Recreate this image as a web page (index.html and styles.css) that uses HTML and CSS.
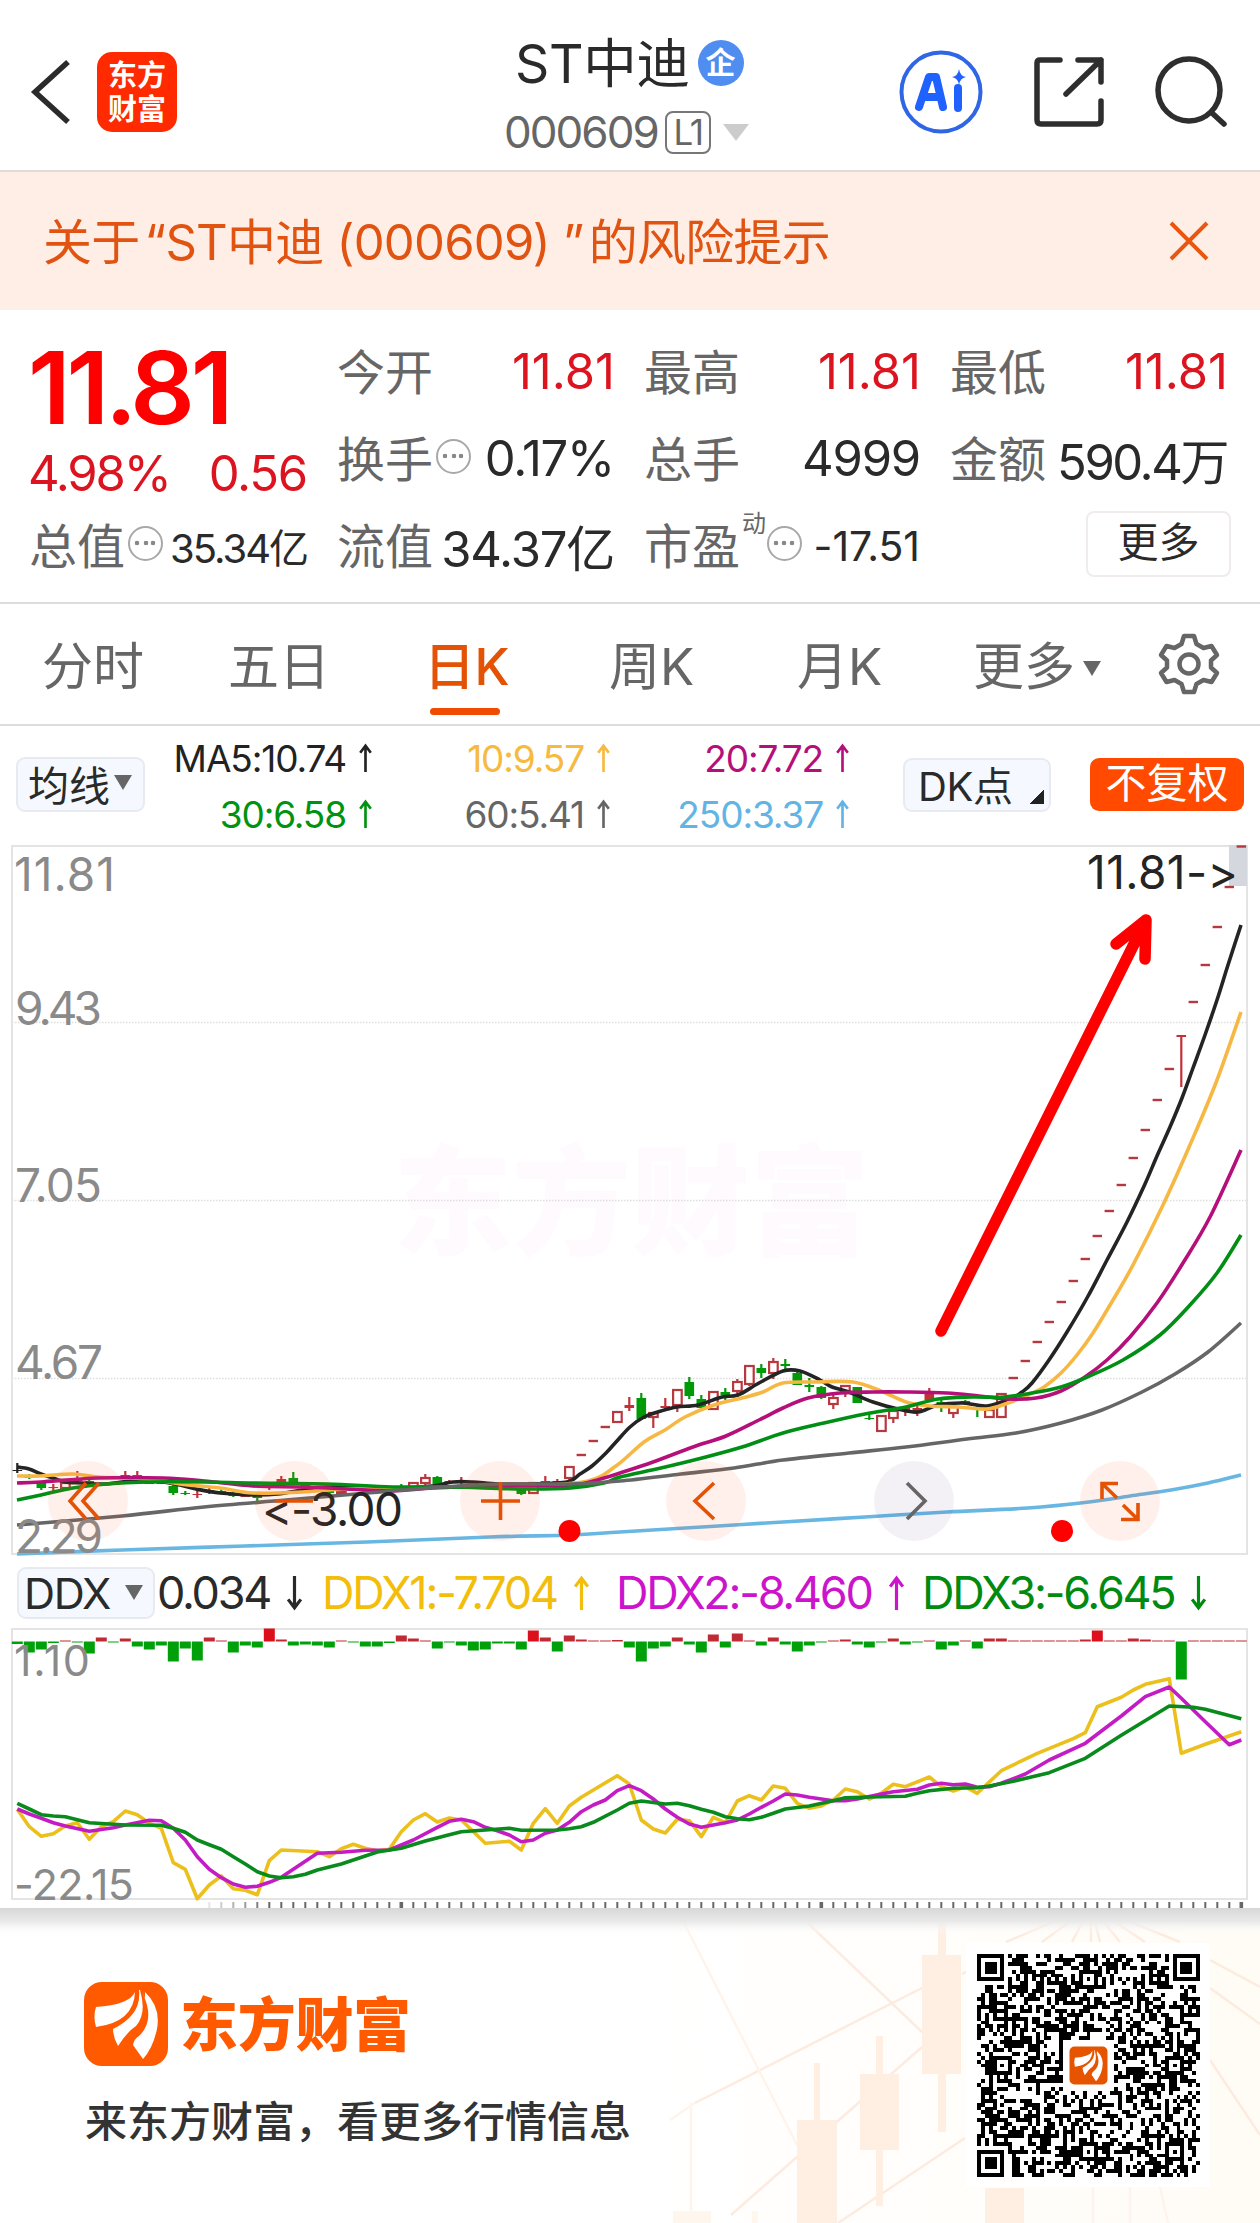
FILE: index.html
```html
<!DOCTYPE html>
<html lang="zh-CN">
<head>
<meta charset="utf-8">
<title>ST中迪 000609</title>
<link rel="stylesheet" href="styles.css">
</head>
<body>
<header class="topbar">
  <div class="topbar-left">
    <svg class="back" width="42" height="70" viewBox="0 0 42 70"><path d="M38 5 5 35 38 65"/></svg>
    <div class="app-logo"><span>东方</span><span>财富</span></div>
  </div>
  <div class="stock">
    <div class="stock-name"><span>ST中迪</span><span class="corp">企</span></div>
    <div class="stock-code"><span>000609</span><span class="level">L1</span><i class="tri tri-light"></i></div>
  </div>
  <div class="topbar-right">
    <svg width="84" height="84" viewBox="0 0 84 84"><circle cx="42" cy="42" r="39.5" fill="none" stroke="#2f66e6" stroke-width="4"/><path d="M20 57 30 27h7l7 30M24 47h16M59 38v20" fill="none" stroke="#1f62ff" stroke-width="8" stroke-linecap="round" stroke-linejoin="round"/><path d="M60 19q1 7 7 8-6 1-7 8-1-7-7-8 6-1 7-8z" fill="#1f62ff"/></svg>
    <svg class="line-icon" width="72" height="72" viewBox="0 0 72 72"><path d="M27 4H7Q4 4 4 7v57q0 4 4 4h56q4 0 4-4V45M45 4h23v22M68 4 33 38"/></svg>
    <svg class="line-icon" width="72" height="72" viewBox="0 0 72 72"><circle cx="34" cy="34" r="31"/><path d="m57 57 12 11"/></svg>
  </div>
</header>

<div class="notice">
  <p>关于<span class="q1">“</span>ST中迪<span class="paren">(</span>000609<span class="paren-end">)</span><span class="q2">”</span>的风险提示</p>
  <svg width="40" height="40" viewBox="0 0 40 40"><path d="M2 2 38 38M38 2 2 38"/></svg>
</div>

<section class="quote">
  <div class="price-block">
    <div class="price">11.81</div>
    <div class="change"><span>4.98%</span><span>0.56</span></div>
  </div>
  <div class="stat"><label>今开</label><b class="up">11.81</b></div>
  <div class="stat"><label>最高</label><b class="up">11.81</b></div>
  <div class="stat"><label>最低</label><b class="up">11.81</b></div>
  <div class="stat"><label>换手</label><i class="dots"></i><b>0.17%</b></div>
  <div class="stat"><label>总手</label><b>4999</b></div>
  <div class="stat"><label>金额</label><b class="tight">590.4万</b></div>
  <div class="stat"><label>总值</label><i class="dots"></i><b class="small">35.34亿</b></div>
  <div class="stat"><label>流值</label><b>34.37亿</b></div>
  <div class="stat"><label>市盈</label><sup>动</sup><i class="dots"></i><b class="small wide">-17.51</b></div>
  <div class="stat"><button class="more">更多</button></div>
</section>

<nav class="tabs">
  <a>分时</a><a>五日</a><a class="active">日K</a><a>周K</a><a>月K</a><a>更多<i class="tri tri-tab"></i></a>
  <svg width="62" height="62" viewBox="0 0 62 62"><path d="M26 3h10l2.500 8 7 4 8-2 5.500 9-6 5.500v7l6 5.500-5.500 9-8-2-7 4-2.500 8H26l-2.500-8-7-4-8 2L3 40l6-5.500v-7L3 22l5.500-9 8 2 7-4z"/><circle cx="31" cy="31" r="9.5"/></svg>
</nav>

<section class="ma-bar">
  <div class="chip chip-ma">均线<i class="tri tri-chip"></i></div>
  <div class="ma-grid">
    <span class="c-ma5">MA5:10.74<svg class="arr"><use href="#up"/></svg></span>
    <span class="c-ma10">10:9.57<svg class="arr"><use href="#up"/></svg></span>
    <span class="c-ma20">20:7.72<svg class="arr"><use href="#up"/></svg></span>
    <span class="c-ma30">30:6.58<svg class="arr"><use href="#up"/></svg></span>
    <span class="c-ma60">60:5.41<svg class="arr"><use href="#up"/></svg></span>
    <span class="c-ma250">250:3.37<svg class="arr"><use href="#up"/></svg></span>
  </div>
  <div class="chip chip-dk">DK点<i class="corner"></i></div>
  <div class="adjust">不复权</div>
</section>

<svg class="chart" id="kline" width="1260" height="711" viewBox="0 845 1260 711">
  <text class="watermark" x="393" y="1246" textLength="476">东方财富</text>
  <g class="grid"><path d="M12 1022.500H1247M12 1200.500H1247M12 1378.500H1247"/></g>
  <rect x="12" y="846" width="1235" height="708" class="frame"/>
  <rect x="1229" y="845" width="18" height="41" fill="#d5d7de"/>
  <g class="axis">
    <text x="14" y="891" textLength="101">11.81</text>
    <text x="15" y="1025" textLength="87">9.43</text>
    <text x="15" y="1202" textLength="87">7.05</text>
    <text x="15" y="1379" textLength="88">4.67</text>
  </g>
  <g id="candles"></g>
  <g id="averages"></g>
  <text class="axis" x="15" y="1553" textLength="88">2.29</text>
  <g class="mark">
    <text x="1087" y="889" textLength="151">11.81-&gt;</text>
    <text x="262" y="1526" textLength="141">&lt;-3.00</text>
  </g>
  <g class="pads">
    <circle cx="88" cy="1501" r="40"/><circle cx="295" cy="1501" r="40"/><circle cx="500" cy="1501" r="40"/><circle cx="706" cy="1501" r="40"/><circle class="off" cx="914" cy="1501" r="40"/><circle cx="1120" cy="1501" r="40"/>
  </g>
  <g class="pad-icons">
    <path d="M86 1483 70 1501 86 1519M99 1483 83 1501 99 1519M481 1501H520M500.500 1482V1520M714 1483 695 1501 714 1519"/>
    <path d="M275 1501H313" stroke-width="5"/>
    <path d="M1118 1483.500H1102V1499M1102 1483.500 1117 1498M1121 1519.500H1138V1503M1138 1519.500 1123 1505"/>
    <path class="off" d="M907 1483 925 1501 907 1519"/>
  </g>
  <g fill="#f00"><circle cx="569.500" cy="1531" r="11"/><circle cx="1062" cy="1531" r="11"/></g>
  <path class="pointer" d="M941 1331 1146 920M1116 944 1146 920 1145 959"/>
</svg>

<section class="ddx-bar">
  <div class="chip chip-ddx">DDX<i class="tri tri-chip"></i></div>
  <span class="d0">0.034<svg class="arr"><use href="#down"/></svg></span>
  <span class="d1">DDX1:-7.704<svg class="arr"><use href="#up"/></svg></span>
  <span class="d2">DDX2:-8.460<svg class="arr"><use href="#up"/></svg></span>
  <span class="d3">DDX3:-6.645<svg class="arr"><use href="#down"/></svg></span>
</section>

<svg class="chart" id="ddx" width="1260" height="281" viewBox="0 1627 1260 281">
  <rect x="12" y="1629" width="1235" height="270" class="frame"/>
  <g id="bars"></g>
  <g class="axis">
    <text x="14" y="1676" textLength="76">1.10</text>
    <text x="14" y="1900" textLength="120">-22.15</text>
  </g>
  <g id="ddx-lines"></g>
  <g id="ticks"></g>
</svg>

<footer class="promo">
  <svg class="promo-bg" width="1260" height="315" viewBox="0 1908 1260 315">
    <defs>
      <linearGradient id="cream" x1="0" x2="1"><stop offset="0" stop-color="#fff"/><stop offset="1" stop-color="#fffcf6"/></linearGradient>
      <linearGradient id="shade" x1="0" x2="0" y1="0" y2="1"><stop offset="0" stop-color="#d6d8d6"/><stop offset=".5" stop-color="#e9e9e9"/><stop offset="1" stop-color="#fff" stop-opacity="0"/></linearGradient>
    </defs>
    <rect x="660" y="1908" width="600" height="315" fill="url(#cream)"/>
    <g fill="none" stroke="#fdebdf" stroke-width="2.500">
      <path d="M792 1908 922 2032M695 2103 922 1988M731 2215 922 2047M838 2223 965 2138M962 1974 970 1970M1210 1960 1260 1987M1210 1988 1260 2024M1210 2060 1260 2135"/>
      <path d="M681 1917 797 2145M670 2120 695 2103M691 2103V2223M1093 2187V2223M1130 2187V2223M1160 2187 1168 2223" stroke="#fef4ec"/>
      <path d="M1091 1906 1006 1942M1091 1906 1042 1942M1091 1906 1072 1942M1091 1906V1942M1091 1906 1100 1942M1091 1906 1120 1942M1091 1906 1145 1942M1091 1906 1180 1942"/>
    </g>
    <g fill="#ffeee2"><path d="M922 1955h39v119h-39zM938 1923h8v32h-8zM938 2074h8v58h-8zM860 2074h39v76h-39zM876 2036h7v38h-7zM876 2150h7v56h-7zM797 2120h40v103h-40zM814 2063h6v57h-6zM985 2188h39v35h-39z"/></g>
    <path d="M673 2211h38v12h-38zM752 2211h6v12h-6z" fill="#fff6ee"/>
    <rect y="1908" width="1260" height="27" fill="url(#shade)"/>
  </svg>
  <div class="promo-text">
    <div class="brand">
      <svg width="84" height="84" viewBox="0 0 84 84"><rect width="84" height="84" rx="18" fill="#ff5a00"/><use href="#petals"/></svg>
      <strong>东方财富</strong>
    </div>
    <p>来东方财富，看更多行情信息</p>
  </div>
  <svg class="qr" id="qr" width="244" height="244" viewBox="-11 -11 244 244"></svg>
</footer>

<svg class="defs" width="0" height="0">
  <symbol id="up" viewBox="0 0 16 34"><path d="M8 33V3M2 11 8 3 14 11"/></symbol>
  <symbol id="down" viewBox="0 0 16 34"><path d="M8 1V31M2 23 8 31 14 23"/></symbol>
  <g id="petals" fill="#fff"><path d="M51 10Q45 23 12 25 9 34 12 45 50 40 51 10z"/><path d="M55 8Q58 33 29 47 29 55 34 64 43 50 52 44 63 32 56 8z"/><path d="M61 10Q77 25 73 47 69 66 59 77L49 63Q50 57 55 54 72 38 58 10L61 16z"/></g>
</svg>
<script src="chart.js"></script>
</body>
</html>
```
FILE: styles.css
```css
* { box-sizing: border-box; }
body {
  margin: 0;
  width: 1260px;
  background: #fff;
  color: #2a2a2a;
  font-family: "Inter", "Noto Sans CJK SC", sans-serif;
  font-feature-settings: "calt" 0;
  letter-spacing: -0.02em;
}
svg { display: block; flex: none; }
.defs { position: absolute; }
.tri { display: inline-block; border: solid transparent; border-width: 0; flex: none; }

.topbar { display: grid; grid-template-columns: 1fr 340px 1fr; height: 172px; border-bottom: 2px solid #dedcdb; }
.topbar-left { display: flex; align-items: flex-start; padding: 52px 0 0 30px; gap: 25px; }
.back { margin-top: 5px; fill: none; stroke: #2b2b2b; stroke-width: 5.5; }
.app-logo { width: 80px; height: 80px; border-radius: 15px; background: #ff2a00; color: #fff; font: 700 29px/34px "Noto Sans CJK SC", sans-serif; letter-spacing: 0; display: flex; flex-direction: column; align-items: center; padding-top: 4px; }
.stock { padding-top: 28px; }
.stock-name { display: flex; align-items: center; height: 62px; padding-left: 55px; font-size: 53.5px; gap: 8px; }
.corp { width: 46px; height: 46px; margin-top: 8px; border-radius: 50%; background: #4f8df0; color: #fff; font-size: 30px; font-weight: 700; line-height: 44px; text-align: center; letter-spacing: 0; }
.stock-code { display: flex; align-items: center; height: 76px; margin-top: 4px; padding-left: 44px; font-size: 44px; color: #666; letter-spacing: -0.045em; }
.level { margin-left: 7px; width: 46px; height: 43px; border: 2px solid #777; border-radius: 8px; font-size: 35px; line-height: 39px; text-align: center; }
.tri-light { margin-left: 12px; border-width: 17px 13px 0; border-top-color: #ccc; }
.topbar-right { display: flex; align-items: center; padding: 14px 0 0 99px; height: 170px; }
.topbar-right svg:nth-child(2) { margin-left: 50px; }
.topbar-right svg:nth-child(3) { margin-left: 50px; }
.line-icon { fill: none; stroke: #2e2e2e; stroke-width: 5.5; stroke-linecap: round; stroke-linejoin: round; }

.notice { display: flex; align-items: center; justify-content: space-between; height: 138px; padding: 0 51px 0 43px; background: #ffeee6; color: #e05310; }
.notice p { margin: 4px 0 0; font-size: 49px; line-height: 60px; letter-spacing: -0.015em; white-space: nowrap; }
.notice .q1 { margin-left: 5px; }
.notice .paren { margin-left: 13px; }
.notice .paren-end { margin-left: -1px; }
.notice .q2 { margin: 0 5px 0 13px; }
.notice svg { fill: none; stroke: #e8560f; stroke-width: 4; }

.quote { display: grid; grid-template-columns: 277px 276px 275px 276px; grid-template-rows: repeat(3, 87px); column-gap: 31px; height: 294px; padding: 18px 30px 0; border-bottom: 2px solid #dcdcdc; }
.price-block { grid-row: span 2; }
.price { font-size: 101px; line-height: 118px; font-weight: 600; color: #f00; letter-spacing: -0.042em; margin-left: -2px; }
.change { display: flex; justify-content: space-between; margin-left: -2px; font-size: 49px; line-height: 56px; color: #dc1420; letter-spacing: -0.045em; }
.change span:last-child { letter-spacing: -0.025em; }
.stat { display: flex; align-items: center; white-space: nowrap; min-width: 0; }
.stat label { margin: -6px 0 0 -1px; font-size: 48px; color: #666; letter-spacing: 0; }
.stat b { margin-left: auto; font-size: 49px; font-weight: 400; letter-spacing: -0.025em; }
.stat .tight { letter-spacing: -0.05em; }
.stat .small { font-size: 40px; letter-spacing: -0.05em; }
.stat .wide { font-size: 41px; letter-spacing: 0; }
.stat .up { color: #dc1420; letter-spacing: 0; margin-right: -1px; }
.stat sup { align-self: flex-start; margin: 10px -2px 0 2px; font-size: 24px; line-height: 24px; color: #666; }
.dots { width: 35px; height: 35px; margin: -5px 0 0 3px; border: 2.5px solid #a8a8a8; border-radius: 50%; background: radial-gradient(circle, #888 2px, transparent 2.6px) center / 8px 8px no-repeat, radial-gradient(circle, #888 2px, transparent 2.6px) 3px center / 8px 8px no-repeat, radial-gradient(circle, #888 2px, transparent 2.6px) 19px center / 8px 8px no-repeat; }
.more { margin: -3px -4px 0 auto; width: 145px; height: 66px; border: 2px solid #f0ecec; border-radius: 8px; background: #fff; font: inherit; font-size: 41px; line-height: 56px; color: #2a2a2a; padding: 0 0 4px; letter-spacing: 0; }

.tabs { display: flex; position: relative; height: 122px; border-bottom: 2px solid #dcdcdc; color: #666; font-size: 51px; line-height: 125px; letter-spacing: 0; padding-left: 42px; }
.tabs a { width: 186px; white-space: nowrap; }
.tabs a:nth-child(2) { width: 196px; }
.tabs a:nth-child(3) { width: 185px; }
.tabs a:nth-child(4) { width: 188px; }
.tabs a:nth-child(5) { width: 176px; }
.tabs a:nth-child(6) { width: 185px; }
.tabs .active { position: relative; color: #e35205; font-weight: 500; letter-spacing: -0.01em; }
.tabs .active::after { content: ""; position: absolute; left: 6px; top: 104px; width: 70px; height: 7px; border-radius: 4px; background: #f04b00; }
.tri-tab { border-width: 15px 9px 0; border-top-color: #666; margin: 0 0 9px 8px; }
.tabs svg { margin: 29px 0 0; fill: none; stroke: #666; stroke-width: 4.5; stroke-linejoin: round; }

.ma-bar { display: flex; align-items: flex-start; height: 119px; padding-left: 16px; }
.chip { display: flex; align-items: center; border: 2px solid #e8eaf2; border-radius: 9px; background: #f5f9ff; font-size: 41px; letter-spacing: 0; white-space: nowrap; }
.tri-chip { border-width: 15px 9px 0; border-top-color: #666; }
.chip-ma { width: 129px; height: 55px; margin-top: 31px; padding: 0 0 4px 10px; gap: 4px; }
.ma-grid { display: grid; grid-template-columns: 228px 238px 239px; grid-auto-rows: 56px; padding-top: 4px; font-size: 37px; letter-spacing: -0.03em; }
.ma-grid span { display: flex; justify-content: flex-end; align-items: center; white-space: nowrap; }
.arr { width: 15px; height: 30px; margin-left: 12px; fill: none; stroke: currentColor; stroke-width: 3; }
.c-ma5 { color: #222; } .c-ma10 { color: #f7b93e; } .c-ma20 { color: #b5107a; }
.c-ma30 { color: #00930f; } .c-ma60 { color: #666; } .c-ma250 { color: #62b4e4; }
.chip-dk { position: relative; width: 148px; height: 54px; margin: 32px 0 0 53px; padding: 0 0 3px 13px; font-size: 40px; letter-spacing: -0.01em; }
.corner { position: absolute; right: 5px; bottom: 6px; width: 14px; height: 14px; background: linear-gradient(135deg, transparent 50%, #222 50%); }
.adjust { width: 154px; height: 53px; margin: 32px 0 0 39px; border-radius: 9px; background: #ff4a00; color: #fff; font-size: 41px; line-height: 51px; text-align: center; letter-spacing: 0; }

.chart { overflow: visible; }
.chart text { font-size: 46px; letter-spacing: 0; }
.chart .axis, .chart .axis text { fill: #8a8a8a; }
.chart .mark text { fill: #242424; }
#ddx .axis text { font-size: 43px; }
.chart .watermark { font: 900 119px "Noto Sans CJK SC", sans-serif; fill: #fefafe; }
.frame { fill: none; stroke: #e4e4e4; stroke-width: 2; }
.grid path { stroke: #dedede; stroke-width: 1.3; stroke-dasharray: 1.5 1.5; }
.pads circle { fill: #ff5a2d; fill-opacity: .09; }
.pads .off { fill: #6a3f84; fill-opacity: .07; }
.pad-icons path { fill: none; stroke: #e35205; stroke-width: 3.6; }
.pad-icons .off { stroke: #666; }
.pointer { fill: none; stroke: #f00; stroke-width: 11.5; stroke-linecap: round; stroke-linejoin: round; }
.series { fill: none; stroke-width: 3.6; stroke-linejoin: round; }

.ddx-bar { display: flex; align-items: center; height: 71px; padding: 2px 0 0 17px; font-size: 45px; letter-spacing: -0.05em; white-space: nowrap; }
.ddx-bar span { display: flex; align-items: center; }
.ddx-bar .arr { width: 17px; height: 36px; margin-left: 16px; }
.chip-ddx { width: 138px; height: 52px; padding-left: 5px; font-size: 43px; gap: 15px; letter-spacing: -0.03em; }
.d0 { width: 167px; padding-left: 2px; }
.d1 { width: 294px; color: #f3bd0c; }
.d2 { width: 306px; color: #cc14cc; }
.d3 { color: #008a10; }

.promo { position: relative; display: flex; justify-content: space-between; height: 315px; padding: 35px 50px 0 84px; }
.promo-bg { position: absolute; left: 0; top: 0; }
.promo-text, .qr { position: relative; }
.promo-text { padding-top: 39px; }
.brand { display: flex; align-items: center; gap: 12px; height: 84px; color: #ff5a00; }
.brand strong { margin-top: -6px; font: 900 58px/84px "Noto Sans CJK SC", sans-serif; letter-spacing: -0.3px; }
.promo-text p { margin: 25px 0 0 1px; font-size: 42px; line-height: 62px; letter-spacing: 0; color: #333; font-weight: 500; }
```
FILE: chart.js
```js
const STEP = 12, LEFT = 17.3;
const px = i => LEFT + STEP * i;
const put = (id, html) => { document.getElementById(id).innerHTML = html; };

// Candles: index, kind (h hollow, r red, g green), body top, body bottom, high, low
const candles = [
  [0,'k',1470,1471,1463,1473],[1,'g',1476,1478,1474,1479],[2,'g',1483,1488,1482,1490],[3,'r',1487,1488,1484,1492],[4,'h',1483,1488,1483,1488],
  [5,'r',1479,1481,1471,1482],[6,'g',1481,1485,1480,1486],[9,'r',1475,1477,1471,1479],[10,'r',1475,1477,1471,1479],[11,'g',1482,1484,1480,1484],[12,'g',1482,1484,1480,1484],
  [13,'g',1486,1493,1483,1495],[14,'g',1493,1494,1491,1495],[15,'r',1494,1495,1491,1498],[16,'r',1490,1491,1486,1494],[17,'g',1491,1494,1489,1494],
  [18,'g',1493,1496,1492,1497],[19,'r',1495,1497,1494,1497],[20,'g',1496,1498,1495,1501],[21,'r',1486,1488,1484,1490],[22,'r',1479,1482,1476,1484],
  [23,'g',1478,1484,1472,1485],[24,'r',1484,1486,1484,1487],[26,'g',1491,1493,1490,1494],[27,'h',1492,1494,1491,1494],[32,'g',1486,1488,1484,1488],
  [33,'h',1483,1487,1483,1487],[34,'h',1478,1483,1474,1485],[35,'g',1477,1485,1476,1486],[36,'r',1481,1482,1480,1484],[37,'r',1481,1482,1477,1484],
  [42,'g',1489,1494,1489,1495],[43,'h',1483,1493,1483,1493],[44,'r',1481,1483,1476,1484],[45,'r',1481,1482,1479,1483],[46,'h',1467,1478,1467,1481],
  [50,'h',1412,1422,1412,1423],[51,'r',1405,1408,1397,1411],[52,'g',1398,1419,1393,1420],[53,'h',1413,1417,1412,1428],[54,'r',1406,1408,1398,1410],
  [55,'h',1390,1405,1390,1412],[56,'g',1382,1396,1377,1399],[57,'g',1399,1408,1395,1410],[58,'h',1392,1409,1392,1409],[59,'g',1392,1395,1388,1400],
  [60,'h',1382,1391,1379,1395],[61,'h',1366,1384,1366,1386],[62,'g',1368,1373,1364,1378],[63,'h',1362,1373,1358,1379],[64,'g',1364,1366,1359,1370],
  [65,'g',1373,1385,1372,1385],[66,'g',1385,1387,1378,1392],[67,'g',1387,1398,1386,1399],[68,'h',1398,1404,1392,1409],[69,'h',1386,1393,1386,1397],
  [70,'g',1387,1403,1387,1403],[71,'g',1418,1419,1414,1420],[72,'h',1416,1431,1416,1432],[73,'h',1411,1418,1410,1423],[74,'r',1408,1411,1406,1416],
  [75,'r',1408,1411,1406,1416],[76,'r',1392,1400,1388,1401],[77,'g',1402,1406,1400,1412],[78,'h',1407,1413,1406,1418],[79,'g',1401,1404,1400,1405],
  [80,'g',1407,1410,1406,1417],[81,'h',1410,1417,1409,1417],[82,'h',1394,1417,1394,1418],[97,'r',1035,1037,1035,1087]
];
// One-price limit-up days
const limitUps = { 47:1455,48:1441,49:1427,83:1378,84:1361,85:1342,86:1322,87:1302,88:1281,89:1259,90:1236,91:1211,92:1185,93:1158,94:1130,95:1100,96:1069,98:1002,99:965,100:927,101:887,102:846.5 };
const tone = { h:'#b8383f', r:'#c4303a', g:'#009a08', k:'#222' };
let out = '';
for (const [i, k, t, b, hi, lo] of candles) {
  const x = px(i), c = tone[k];
  if (k === 'h') {
    out += `<path d="M${x} ${hi}V${t}M${x} ${b}V${lo}" stroke="${c}" stroke-width="2.200"/><rect x="${x-4.2}" y="${t}" width="8.600" height="${b-t}" fill="#fff" stroke="${c}" stroke-width="2.200"/>`;
  } else {
    out += `<path d="M${x} ${hi}V${lo}" stroke="${c}" stroke-width="2.200"/><rect x="${x-4.8}" y="${t}" width="9.600" height="${b-t}" fill="${c}"/>`;
  }
}
for (const i in limitUps) out += `<rect x="${px(+i)-4.7}" y="${limitUps[i]-1.2}" width="9.400" height="2.400" fill="#b8383f"/>`;
put('candles', out);

// Catmull-Rom smoothing through the sampled points
function smooth(str) {
  const n = str.split(/[ ,]+/).map(Number), p = [];
  for (let i = 0; i < n.length; i += 2) p.push([n[i], n[i + 1]]);
  let d = `M${p[0]}`;
  for (let i = 0; i < p.length - 1; i++) {
    const a = p[i - 1] || p[i], b = p[i], c = p[i + 1], e = p[i + 2] || c;
    d += `C${b[0] + (c[0]-a[0])/6} ${b[1] + (c[1]-a[1])/6} ${c[0] - (e[0]-b[0])/6} ${c[1] - (e[1]-b[1])/6} ${c[0]} ${c[1]}`;
  }
  return d;
}
const averages = [
  ['#242424','17,1467 29,1469 41,1474 53,1478 65,1482 82,1483 106,1484 139,1480 163,1482 180,1485 196,1489 220,1493 253,1495 278,1494 302,1490 327,1487 400,1488 433,1486 453,1482 473,1482 498,1484 531,1484 567,1482 580,1474 592,1466 606,1453 616,1442 630,1427 644,1417 661,1411 677,1407 698,1405 722,1397 738,1395 759,1383 783,1371 800,1371 820,1380 832,1387 849,1392 873,1402 898,1409 918,1412 938,1405 963,1403 987,1406 1012,1398 1022,1392 1032,1383 1049,1360 1067,1332 1087,1298 1107,1260 1127,1222 1145,1184 1157,1156 1170,1127 1182,1098 1193,1068 1205,1035 1217,1000 1228,965 1241,925'],
  ['#f6b843','17,1476 41,1476 73,1474 98,1477 147,1479 180,1484 220,1488 253,1493 302,1492 347,1489 449,1487 531,1486 588,1481 616,1466 644,1442 665,1430 685,1417 714,1405 742,1398 763,1392 783,1383 816,1382 853,1382 881,1391 906,1402 930,1406 959,1407 987,1409 1008,1403 1028,1395 1044,1387 1061,1373 1077,1355 1093,1333 1113,1300 1133,1265 1163,1205 1193,1138 1217,1080 1241,1012'],
  ['#b5107a','17,1483 41,1482 98,1478 163,1478 204,1481 253,1486 302,1487 347,1489 392,1491 433,1488 490,1486 571,1485 604,1478 620,1473 653,1462 693,1447 726,1436 759,1420 783,1408 808,1398 840,1393 873,1392 906,1392 947,1393 979,1396 1008,1399 1036,1398 1061,1391 1085,1377 1107,1360 1130,1337 1157,1303 1183,1263 1210,1217 1241,1150'],
  ['#008f14','17,1500 41,1495 73,1488 106,1484 147,1482 204,1482 253,1483 327,1484 392,1487 449,1487 522,1489 571,1488 604,1483 620,1477 661,1468 702,1458 742,1447 783,1433 824,1423 865,1414 906,1407 938,1399 971,1397 1004,1397 1032,1393 1061,1387 1085,1378 1123,1360 1160,1335 1190,1305 1217,1273 1241,1235'],
  ['#666','17,1525 122,1516 204,1507 286,1500 367,1493 429,1488 498,1484 571,1484 620,1481 681,1474 734,1468 783,1460 849,1453 906,1447 967,1439 1016,1433 1061,1423 1102,1410 1142,1392 1175,1374 1208,1352 1241,1323'],
  ['#68b6e2','17,1554 122,1550 245,1546 367,1542 490,1537 571,1535 620,1532 702,1527 783,1522 865,1517 947,1512 1028,1508 1089,1502 1130,1496 1171,1490 1208,1483 1241,1475']
];
put('averages', averages.map(([c, s]) => `<path class="series" stroke="${c}" d="${smooth(s)}"/>`).join(''));

// DDX histogram
const ddx = [-2.5,-11,-8,-1.5,1,-1,-12,4,-1,3,-5,-8,-4,-20,-7,-19,4,1,-11,-4,-6,13,2,-4,-3,-4,-6,1,-1,-5,-5,-1.5,6,3,1,-7,-1,-4,-9,-8,-2,-2,-8,11,4,-10,6,2,1,1,1.5,-6,-20,-7,-5,4,-3,-11,7,-6,8,1,-4,4,-3,-10,-4,-1,1,2,-3,-6,-1,3,-3,-1,1,-8,-4,1,-7,3,3,1,1,1,1,1,1,2,11,1,1,3,2,1,1,-38,1,1,1,1,1];
put('bars', ddx.map((v, i) => v > 0
  ? `<rect x="${px(i)-5.5}" y="${1641.5-v}" width="11" height="${v}" fill="${v > 10 ? '#dc0f1c' : '#c02a34'}"/>`
  : `<rect x="${px(i)-5.5}" y="1641.500" width="11" height="${-v}" fill="#00a00a"/>`).join(''));

const lines = [
  ['#ecc01c','0:598,1:650,2:679,3:671,4:648,5:638,6:688,7:650,8:635,9:603,10:614,11:640,12:655,13:758,14:778,15:866,16:825,17:798,18:836,19:841,20:854,21:752,22:720,25:725,26:740,27:716,28:703,29:715,30:722,31:718,32:665,33:630,34:611,35:636,36:624,37:630,39:700,41:694,42:720,43:640,44:596,45:640,46:588,47:562,50:497,51:522,52:630,53:657,54:669,55:628,56:632,57:680,58:622,59:638,60:573,61:557,62:570,63:528,64:535,65:580,66:595,67:588,68:570,69:537,70:545,71:567,72:550,73:523,74:530,76:501,77:530,78:543,79:530,80:550,82:482,85:430,88:386,89:368,90:290,92:262,93:240,94:223,96:206,97:430,99:403,102:365'],
  ['#c41cc4','0:597,1:612,2:625,3:638,4:648,6:664,8:653,9:645,11:631,12:632,13:655,14:690,15:740,16:778,17:803,18:822,19:832,20:829,21:817,22:802,23:778,25:730,27:727,29:721,31:720,32:705,33:690,35:652,36:634,37:628,38:635,39:652,40:662,41:675,42:695,43:690,44:670,45:660,46:637,47:605,48:585,49:570,50:542,51:527,52:542,53:567,54:597,55:622,56:642,57:652,58:645,59:638,60:630,61:612,62:592,63:573,64:552,65:555,66:562,68:572,69:572,70:567,72:552,73:545,75:538,76:525,77:520,78:524,79:522,80:532,81:530,82:520,84:492,86:450,89:400,92:318,94:260,96:231,97:265,99:335,101:404,102:390'],
  ['#088a1c','0:580,1:597,2:614,3:618,4:620,6:638,9:645,12:646,13:655,14:667,15:690,16:704,17:718,18:740,19:762,20:785,21:798,22:803,23:800,24:793,25:780,27:762,29:738,30:726,32:715,34:693,36:674,37:665,39:660,41:655,42:661,45:660,46:656,47:650,48:637,50:600,51:580,52:573,54:582,55:580,56:587,57:598,58:607,59:620,60:626,61:629,62:622,63:610,64:597,66:588,68:572,69:563,71:561,74:559,75:550,76:542,78:535,80:533,81:528,83:514,86:488,89:445,92:376,96:288,98:292,99:298,102:326']
];
put('ddx-lines', lines.map(([c, s]) => `<polyline class="series" stroke="${c}" points="${
  s.split(',').map(q => { const [i, v] = q.split(':'); return `${px(+i)},${(1610 + v / 3).toFixed(1)}`; }).join(' ')}"/>`).join(''));

// Date ticks, fading in on the left
let ticks = '';
for (let i = 16; i <= 102; i++) {
  const w = i === 32 || i === 67 || i === 102 ? 3.6 : 2;
  ticks += `<rect x="${px(i) - w / 2}" y="1902" width="${w}" height="6" fill="#6a6668" opacity="${Math.min(1, (i - 15) / 6)}"/>`;
}
put('ticks', ticks);

// 57-module code with finder, alignment and timing patterns
const N = 57, M = 223 / N;
const grid = Array.from({ length: N }, () => Array(N).fill(0));
let seed = 20609;
for (let y = 0; y < N; y++) for (let x = 0; x < N; x++) {
  seed = (seed * 1103515245 + 12345) % 2147483648;
  grid[y][x] = (seed >> 16) & 1;
}
for (let i = 0; i < N; i++) grid[6][i] = grid[i][6] = (i + 1) % 2;
const ring = (cx, cy, r, blank) => {
  for (let dy = -r; dy <= r; dy++) for (let dx = -r; dx <= r; dx++) {
    const y = cy + dy, x = cx + dx, m = Math.max(Math.abs(dx), Math.abs(dy));
    if (grid[y] && x >= 0 && x < N) grid[y][x] = blank.includes(m) ? 0 : 1;
  }
};
[[3,3],[53,3],[3,53]].forEach(([x, y]) => ring(x, y, 4, [2, 4]));
[[28,6],[6,28],[50,28],[28,50],[50,50]].forEach(([x, y]) => ring(x, y, 2, [1]));
let d = '';
grid.forEach((row, y) => row.forEach((on, x) => {
  if (on && !(Math.abs(x - 28) <= 6 && Math.abs(y - 28) <= 6)) d += `M${(x*M).toFixed(2)} ${(y*M).toFixed(2)}h${M.toFixed(2)}v${M.toFixed(2)}h-${M.toFixed(2)}z`;
}));
put('qr', `<rect x="-11" y="-11" width="244" height="244" fill="#fff"/><path d="${d}" shape-rendering="crispEdges"/><g transform="translate(92.500 92.500)"><rect width="38" height="38" rx="5" fill="#e65400"/><use href="#petals" transform="scale(.45)"/></g>`);
```
